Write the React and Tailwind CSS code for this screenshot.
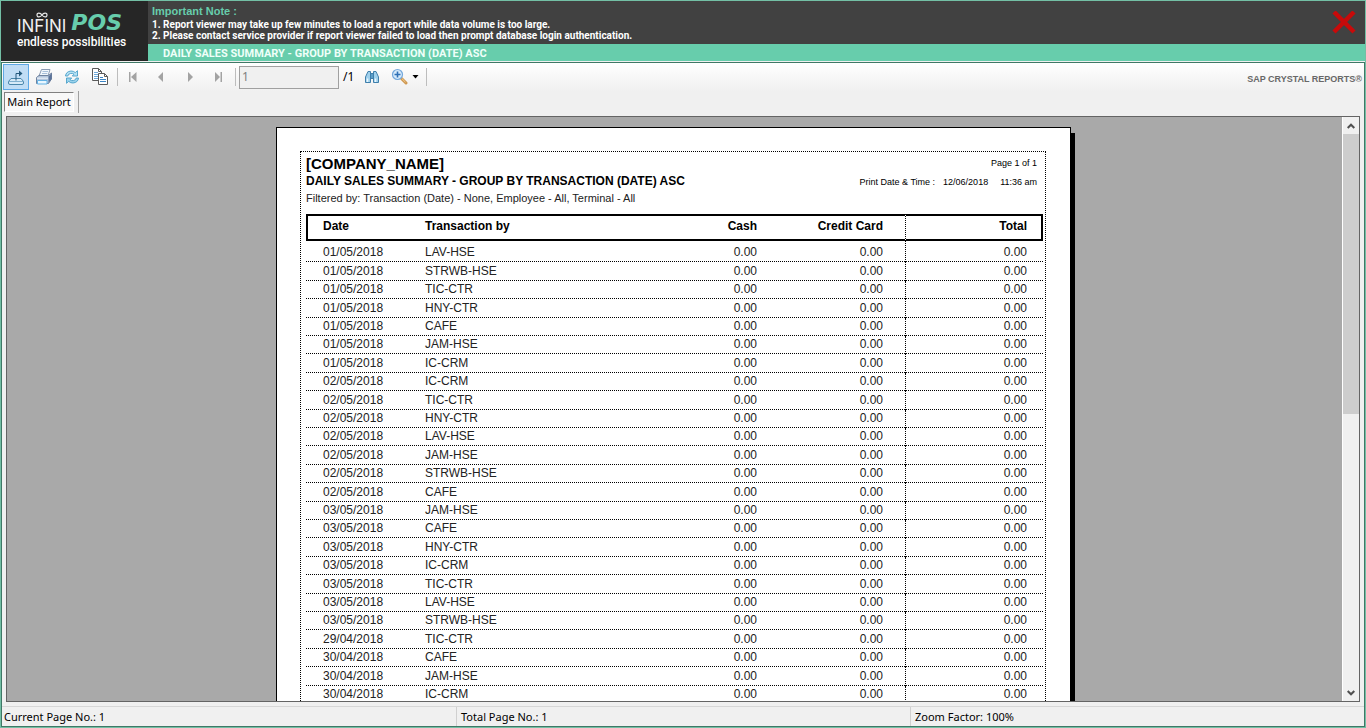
import React from "react";

const rows = [
  ["01/05/2018", "LAV-HSE"],
  ["01/05/2018", "STRWB-HSE"],
  ["01/05/2018", "TIC-CTR"],
  ["01/05/2018", "HNY-CTR"],
  ["01/05/2018", "CAFE"],
  ["01/05/2018", "JAM-HSE"],
  ["01/05/2018", "IC-CRM"],
  ["02/05/2018", "IC-CRM"],
  ["02/05/2018", "TIC-CTR"],
  ["02/05/2018", "HNY-CTR"],
  ["02/05/2018", "LAV-HSE"],
  ["02/05/2018", "JAM-HSE"],
  ["02/05/2018", "STRWB-HSE"],
  ["02/05/2018", "CAFE"],
  ["03/05/2018", "JAM-HSE"],
  ["03/05/2018", "CAFE"],
  ["03/05/2018", "HNY-CTR"],
  ["03/05/2018", "IC-CRM"],
  ["03/05/2018", "TIC-CTR"],
  ["03/05/2018", "LAV-HSE"],
  ["03/05/2018", "STRWB-HSE"],
  ["29/04/2018", "TIC-CTR"],
  ["30/04/2018", "CAFE"],
  ["30/04/2018", "JAM-HSE"],
  ["30/04/2018", "IC-CRM"],
];

// Five rows share 92px, so heights cycle between 18 and 19.
const rowHeights = ["h-[18px]", "h-[19px]", "h-[18px]", "h-[19px]", "h-[18px]"];

function ExportIcon() {
  return (
    <svg width="18" height="18" viewBox="0 0 18 18" fill="none">
      <path d="M4 10.500 L1.500 13.500 V15 Q1.500 16.500 3 16.500 H15 Q16.500 16.500 16.500 15 V13.500 L14 10.500 Z" fill="#d6eaf8" stroke="#4a86ab" />
      <path d="M2 13.500 H16" stroke="#7fb0cf" />
      <path d="M9 12.500 V5.500 H12.500" stroke="#24597c" />
      <path d="M12 2.500 L15.500 5.500 L12 8.500 Z" fill="#24597c" />
    </svg>
  );
}

function PrintIcon() {
  return (
    <svg width="18" height="18" viewBox="0 0 18 18">
      <path d="M6.500 1.500 H15 L13 8 H4 Z" fill="#f2f7fc" stroke="#8b9bb3" />
      <path d="M7.500 3.500 H13 M7 5.500 H12.300" stroke="#a9c0da" />
      <path d="M1.500 9.500 L4 7.500 H13.500 L16.500 5 V11 L13.500 15.500 H1.500 Z" fill="#b4c6dd" stroke="#70839f" />
      <path d="M13.500 8.500 L16.500 5.500 V11 L13.500 15 Z" fill="#5b739a" />
      <path d="M2 9.500 H13 V11 H2 Z" fill="#dde6f1" />
      <path d="M2.500 12.500 H12 V16 H2.500 Z" fill="#e8f6ff" stroke="#63b1e3" />
    </svg>
  );
}

function RefreshIcon() {
  return (
    <svg width="18" height="18" viewBox="0 0 18 18">
      <path d="M2.500 8 Q3 3.500 8 3 Q10.500 2.900 12.300 4.600 L14.500 2.700 V8 H9.300 L11 6.200 Q9.500 5 7.500 5.500 Q5 6 4.800 8 Z" fill="#b5e1f4" stroke="#4a9fc8" strokeWidth=".9" />
      <path d="M15.500 10 Q15 14.500 10 15 Q7.500 15.100 5.700 13.400 L3.500 15.300 V10 H8.700 L7 11.800 Q8.500 13 10.500 12.500 Q13 12 13.200 10 Z" fill="#9bd3ec" stroke="#4a9fc8" strokeWidth=".9" />
    </svg>
  );
}

function CopyIcon() {
  return (
    <svg width="18" height="18" viewBox="0 0 18 18">
      <path d="M1.500 .5 H7.500 L10.500 3.500 V12.500 H1.500 Z" fill="#fff" stroke="#5a5a5a" />
      <path d="M7.500 .5 V3.500 H10.500" fill="none" stroke="#5a5a5a" />
      <path d="M3 4.500 H7 M3 6.500 H8 M3 8.500 H8 M3 10.500 H8" stroke="#6fa9da" />
      <path d="M7.500 5.500 H13.500 L16.500 8.500 V16.500 H7.500 Z" fill="#fff" stroke="#5a5a5a" />
      <path d="M13.500 5.500 V8.500 H16.500" fill="none" stroke="#5a5a5a" />
      <path d="M9 9.500 H12 M9 11.500 H15 M9 13.500 H15" stroke="#3d86c6" />
    </svg>
  );
}

function NavIcon({ d, bar }) {
  return (
    <svg width="18" height="18" viewBox="0 0 18 18" fill="#a3a3a3">
      <path d={d} />
      {bar !== undefined && <rect x={bar} y="4" width="1.500" height="10" />}
    </svg>
  );
}

function FindIcon() {
  return (
    <svg width="18" height="18" viewBox="0 0 18 18">
      <path d="M5 3.500 H7.500 V14.500 H2.500 V9 Z" fill="#9fd0ec" stroke="#3f7fab" />
      <path d="M13 3.500 H10.500 V14.500 H15.500 V9 Z" fill="#9fd0ec" stroke="#3f7fab" />
      <path d="M7.500 5.500 H10.500 V10.500 H7.500 Z" fill="#5b9dc8" stroke="#3f7fab" />
      <path d="M4.500 10.500 V14 M12.500 10.500 V14" stroke="#eaf6fd" strokeWidth="1.500" />
    </svg>
  );
}

function ZoomIcon() {
  return (
    <svg width="18" height="18" viewBox="0 0 18 18">
      <path d="M11.500 10.500 L16 15" stroke="#cf9850" strokeWidth="3" strokeLinecap="round" />
      <path d="M11.800 10.500 L15.500 14.200" stroke="#f3cf94" strokeWidth="1" />
      <circle cx="7.500" cy="6.500" r="5" fill="#d6eafb" stroke="#74a8dc" strokeWidth="1.200" />
      <path d="M4.500 6.500 H10.500 M7.500 3.500 V9.500" stroke="#2f70b6" strokeWidth="1.600" />
    </svg>
  );
}

function ToolButton({ label, active, children }) {
  return (
    <button
      type="button"
      aria-label={label}
      className={
        active
          ? "flex h-[26px] w-[26px] items-center justify-center border border-[#5fa9e6] bg-[#c0ddf5]"
          : "flex h-[26px] w-[26px] items-center justify-center"
      }
    >
      {children}
    </button>
  );
}

function Divider() {
  return <div className="mr-[3px] ml-1 h-[18px] w-px bg-[#bdbdbd]" />;
}

function Header() {
  return (
    <header className="flex h-[60px] shrink-0 bg-[#414141]">
      <div className="w-[147px] shrink-0 bg-[#262626] pl-4">
        <div className="flex h-[33px] items-end gap-[5px] leading-none">
          <div className="flex flex-col items-center gap-px">
            <svg width="12" height="6" viewBox="0 0 12 6" fill="none" stroke="#e8e8e8" strokeWidth="1.200">
              <path d="M6 3 C4.500 .8 1 .2 1 3 C1 5.800 4.500 5.200 6 3 C7.500 .8 11 .2 11 3 C11 5.800 7.500 5.200 6 3 Z" />
            </svg>
            <span className="font-['Inter'] text-[17px] leading-[15px] text-[#f0f0f0]">INFINI</span>
          </div>
          <span className="font-['DejaVu_Sans'] text-[22px] leading-[22px] font-bold text-[#67cdac] italic">POS</span>
        </div>
        <div className="pt-px font-['Roboto'] text-[12px] leading-[14px] font-medium text-white">endless possibilities</div>
      </div>
      <div className="flex min-w-0 flex-1 flex-col">
        <div className="flex h-[43px] justify-between pl-1">
          <div className="pt-1 font-['Roboto'] text-[10px] leading-[11px] font-bold text-white">
            <p className="mb-[2px] font-['Liberation_Sans'] text-[11px] leading-3 text-[#67cdac]">Important Note :</p>
            <p>1. Report viewer may take up few minutes to load a report while data volume is too large.</p>
            <p>2. Please contact service provider if report viewer failed to load then prompt database login authentication.</p>
          </div>
          <button type="button" aria-label="Close" className="mr-[7px] flex w-7 items-center justify-center">
            <svg width="24" height="24" viewBox="0 0 24 24" stroke="#c80a0a" strokeWidth="4.500">
              <path d="M2 1 L22 21 M22 1 L2 21" />
            </svg>
          </button>
        </div>
        <h1 className="h-[17px] overflow-hidden bg-[#67cdac] pl-[15px] font-['Roboto'] text-[11px] leading-5 font-bold text-[#effff9]">
          DAILY SALES SUMMARY - GROUP BY TRANSACTION (DATE) ASC
        </h1>
      </div>
    </header>
  );
}

function Toolbar() {
  return (
    <div className="flex h-[28px] shrink-0 items-center bg-linear-to-b from-white to-[#f0f0f0] pl-px">
      <div className="flex gap-[2px]">
        <ToolButton label="Export Report" active><ExportIcon /></ToolButton>
        <ToolButton label="Print Report"><PrintIcon /></ToolButton>
        <ToolButton label="Refresh"><RefreshIcon /></ToolButton>
        <ToolButton label="Copy"><CopyIcon /></ToolButton>
      </div>
      <Divider />
      <div className="flex gap-[2px]">
        <ToolButton label="First Page"><NavIcon d="M11.500 4 V14 L6 9 Z" bar={4} /></ToolButton>
        <ToolButton label="Previous Page"><NavIcon d="M10 4 V14 L5 9 Z" /></ToolButton>
        <ToolButton label="Next Page"><NavIcon d="M7 4 V14 L12 9 Z" /></ToolButton>
        <ToolButton label="Last Page"><NavIcon d="M6 4 V14 L11 9 Z" bar={11.5} /></ToolButton>
      </div>
      <Divider />
      <input
        aria-label="Page number"
        defaultValue="1"
        className="h-[23px] w-[100px] border border-[#a0a0a0] bg-[#f0f0f0] px-[2px] pb-[2px] font-['Noto_Sans'] text-[12px] text-[#808080]"
      />
      <span className="ml-1 w-4 font-['Noto_Sans'] text-[12px]">/1</span>
      <ToolButton label="Find Text"><FindIcon /></ToolButton>
      <button type="button" aria-label="Zoom" className="ml-[5px] flex h-[26px] w-8 items-center gap-1">
        <ZoomIcon />
        <svg width="7" height="4" viewBox="0 0 7 4"><path d="M.5 0 H6.500 L3.500 3.500 Z" /></svg>
      </button>
      <Divider />
      <div className="ml-auto flex items-start pt-1 pr-[2px] font-['Liberation_Sans'] text-[9px] leading-3 font-bold text-[#686868]">
        SAP CRYSTAL REPORTS<span>®</span>
      </div>
    </div>
  );
}

function ReportPage() {
  return (
    <div className="mx-auto mt-[10px] w-[795px] shrink-0 border border-black bg-white py-[23px] pr-6 pl-[23px] shadow-[4px_6px_0_#000]">
      <div className="border border-dotted border-black px-[2px] pb-20 pl-[5px]">
        <div className="flex justify-between pr-[6px]">
          <div>
            <h2 className="mt-[2px] text-[15px] leading-5 font-bold">[COMPANY_NAME]</h2>
            <h3 className="text-[12px] leading-[15px] font-bold">DAILY SALES SUMMARY - GROUP BY TRANSACTION (DATE) ASC</h3>
            <p className="text-[11px] leading-[18px] text-[#222]">Filtered by: Transaction (Date) - None, Employee - All, Terminal - All</p>
          </div>
          <div className="pt-1 text-right text-[9px] leading-[15px]">
            <p>Page 1 of 1</p>
            <p className="mt-1 flex gap-2">
              <span>Print Date &amp; Time :</span>
              <span>12/06/2018</span>
              <span className="ml-1">11:36 am</span>
            </p>
          </div>
        </div>
        <table className="mt-[7px] w-full table-fixed border-separate border-spacing-0 text-[12px] leading-4">
          <colgroup>
            <col className="w-[119px]" />
            <col className="w-[205px]" />
            <col className="w-[137px]" />
            <col className="w-[138px]" />
            <col />
          </colgroup>
          <thead>
            <tr className="h-[27px]">
              <th className="border-y-2 border-l-2 border-black p-0 pb-1 pl-[15px] text-left">Date</th>
              <th className="border-y-2 border-black p-0 pb-1 text-left">Transaction by</th>
              <th className="border-y-2 border-black p-0 pr-[10px] pb-1 text-right">Cash</th>
              <th className="border-y-2 border-black p-0 pr-[22px] pb-1 text-right">Credit Card</th>
              <th className="border-y-2 border-r-2 border-l border-black p-0 pr-[14px] pb-1 text-right [border-left-style:dotted]">Total</th>
            </tr>
          </thead>
          <tbody className="text-[#222]">
            {rows.map(([date, by], i) => (
              <tr
                key={i}
                className={`bg-[linear-gradient(90deg,#000_50%,transparent_50%)] bg-[length:2px_1px] bg-bottom-left bg-repeat-x ${i === 0 ? "h-[21px]" : rowHeights[i % 5]}`}
              >
                <td className="p-0 pb-[2px] pl-[17px] align-bottom">{date}</td>
                <td className="p-0 pb-[2px] align-bottom">{by}</td>
                <td className="p-0 pr-[10px] pb-[2px] text-right align-bottom">0.00</td>
                <td className="p-0 pr-[22px] pb-[2px] text-right align-bottom">0.00</td>
                <td className="border-l border-dotted border-black p-0 pr-4 pb-[2px] text-right align-bottom">0.00</td>
              </tr>
            ))}
          </tbody>
        </table>
      </div>
    </div>
  );
}

function ScrollBar() {
  return (
    <div className="flex w-[17px] shrink-0 flex-col border-l border-white bg-[#f0f0f0]">
      <button type="button" aria-label="Scroll up" className="flex h-[17px] shrink-0 items-center justify-center">
        <svg width="8" height="6" viewBox="0 0 8 6" fill="none" stroke="#505050" strokeWidth="2"><path d="M.7 5 L4 1.700 L7.300 5" /></svg>
      </button>
      <div className="h-[280px] shrink bg-[#cdcdcd]" />
      <div className="flex-1" />
      <button type="button" aria-label="Scroll down" className="flex h-[17px] shrink-0 items-center justify-center">
        <svg width="8" height="6" viewBox="0 0 8 6" fill="none" stroke="#505050" strokeWidth="2"><path d="M.7 1 L4 4.300 L7.300 1" /></svg>
      </button>
    </div>
  );
}

export default function App() {
  return (
    <div className="h-screen border border-[#73bfa5] bg-[#f0f0f0] text-black">
      <div className="flex h-full flex-col">
        <Header />
        <main className="mt-px flex min-h-0 flex-1 flex-col border border-[#3f7866]">
          <Toolbar />
          <div className="flex h-[25px] shrink-0 items-start pl-[2px] font-['Noto_Sans'] text-[11px]">
            <button type="button" className="mt-px h-5 w-[70px] border border-t-[#808080] border-r-white border-b-white border-l-[#808080] bg-[#f8f8f8] leading-4">
              Main Report
            </button>
            <div className="ml-1 h-[22px] w-px bg-[#a0a0a0]" />
          </div>
          <div className="mr-1 ml-1 flex min-h-0 flex-1 border border-[#646464]">
            <div className="flex min-w-0 flex-1 items-start overflow-hidden bg-[#a9a9a9] pr-[2px] font-['Liberation_Sans']">
              <ReportPage />
            </div>
            <ScrollBar />
          </div>
          <footer className="mt-1 grid h-5 shrink-0 grid-cols-3 border-t border-[#d7d7d7] font-['Noto_Sans'] text-[11px] leading-[19px]">
            <span className="pl-[2px]">Current Page No.: 1</span>
            <span className="border-l border-[#d0d0d0] pl-1">Total Page No.: 1</span>
            <span className="border-l border-[#d0d0d0] pl-1">Zoom Factor: 100%</span>
          </footer>
        </main>
      </div>
    </div>
  );
}
